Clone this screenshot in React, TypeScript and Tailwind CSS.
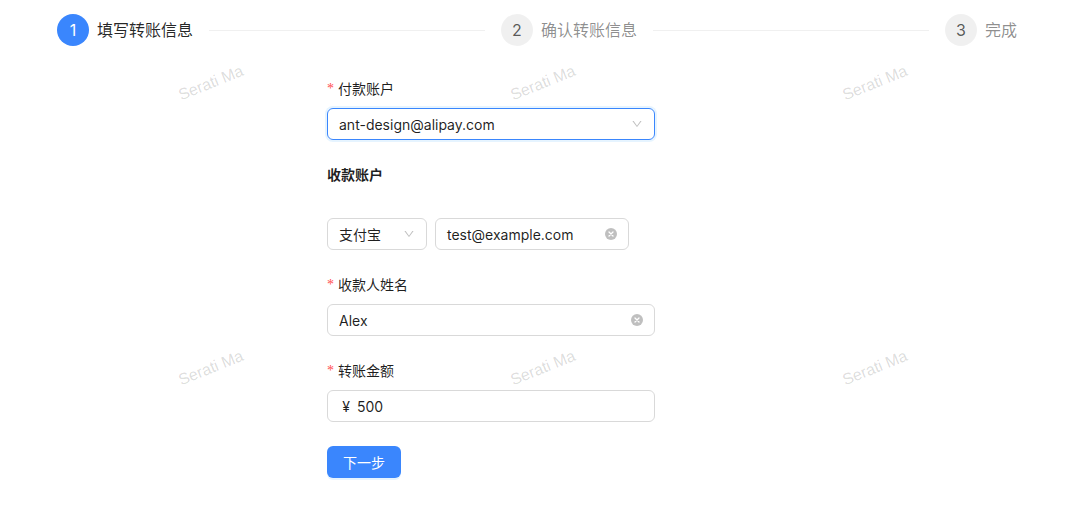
import React from "react";

const Down = () => (
  <svg viewBox="0 0 1024 1024" width="12" height="12" fill="rgba(0,0,0,0.25)">
    <path d="M884 256h-75c-5.1 0-9.9 2.5-12.9 6.6L512 654.2 227.9 262.6c-3-4.1-7.8-6.6-12.9-6.6h-75c-6.5 0-10.3 7.4-6.5 12.7l352.6 486.1c12.8 17.6 39 17.6 51.7 0l352.6-486.1c3.9-5.3.1-12.7-6.4-12.7z" />
  </svg>
);

const Clear = () => (
  <svg viewBox="0 0 12 12" width="12" height="12">
    <circle cx="6" cy="6" r="6" fill="rgba(0,0,0,0.25)" />
    <path d="M4 4L8 8M8 4L4 8" stroke="#fff" strokeWidth="1.3" strokeLinecap="round" />
  </svg>
);

const Label = ({ children, required }: { children: React.ReactNode; required?: boolean }) => (
  <div className="h-[22px] leading-[22px] mb-[8px] text-[14px] text-[rgba(0,0,0,0.88)] flex items-center">
    {required && (
      <span className="text-[#ff4d4f] mr-[4px] text-[14px] font-['Liberation_Serif',serif] leading-none">*</span>
    )}
    {children}
  </div>
);

const marks = [
  [211, 83],
  [543, 83],
  [875, 83],
  [211, 368],
  [543, 368],
  [875, 368],
];

export default function App() {
  return (
    <div className="relative w-[1067px] h-[505px] bg-white overflow-hidden font-['Inter','Noto_Sans_CJK_SC',sans-serif] text-[14px] text-[rgba(0,0,0,0.88)]">
      {/* Steps */}
      <div className="flex ml-[57px] w-[976px] mt-[14px]">
        <div className="flex-1 flex items-start overflow-hidden">
          <div className="w-[32px] h-[32px] rounded-full bg-[#3a86fd] text-white flex items-center justify-center text-[16px] shrink-0">1</div>
          <div className="relative ml-[8px] pr-[16px] text-[16px] leading-[32px] text-[rgba(0,0,0,0.85)] whitespace-nowrap">
            填写转账信息
            <div className="absolute left-full top-[16px] w-[9999px] h-px bg-[rgba(5,5,5,0.06)]" />
          </div>
        </div>
        <div className="flex-1 pl-[16px] flex items-start overflow-hidden">
          <div className="w-[32px] h-[32px] rounded-full bg-[rgba(0,0,0,0.06)] text-[rgba(0,0,0,0.65)] flex items-center justify-center text-[16px] shrink-0">2</div>
          <div className="relative ml-[8px] pr-[16px] text-[16px] leading-[32px] text-[rgba(0,0,0,0.45)] whitespace-nowrap">
            确认转账信息
            <div className="absolute left-full top-[16px] w-[9999px] h-px bg-[rgba(5,5,5,0.06)]" />
          </div>
        </div>
        <div className="pl-[16px] flex items-start">
          <div className="w-[32px] h-[32px] rounded-full bg-[rgba(0,0,0,0.06)] text-[rgba(0,0,0,0.65)] flex items-center justify-center text-[16px] shrink-0">3</div>
          <div className="ml-[8px] pr-[16px] text-[16px] leading-[32px] text-[rgba(0,0,0,0.45)] whitespace-nowrap">完成</div>
        </div>
      </div>

      {/* Form */}
      <div className="ml-[327px] w-[328px] mt-[32px]">
        <div className="mb-[24px]">
          <Label required>付款账户</Label>
          <div className="h-[32px] rounded-[6px] border border-[#3a86fd] shadow-[0_0_0_2px_rgba(5,145,255,0.1)] px-[11px] flex items-center justify-between">
            <span>ant-design@alipay.com</span>
            <Down />
          </div>
        </div>

        <div className="h-[22px] leading-[22px] font-semibold mb-[32px]">收款账户</div>

        <div className="flex gap-[8px] mb-[24px]">
          <div className="w-[100px] h-[32px] rounded-[6px] border border-[#d9d9d9] px-[11px] flex items-center justify-between">
            <span>支付宝</span>
            <Down />
          </div>
          <div className="w-[194px] h-[32px] rounded-[6px] border border-[#d9d9d9] px-[11px] flex items-center justify-between">
            <span>test@example.com</span>
            <Clear />
          </div>
        </div>

        <div className="mb-[24px]">
          <Label required>收款人姓名</Label>
          <div className="h-[32px] rounded-[6px] border border-[#d9d9d9] px-[11px] flex items-center justify-between">
            <span>Alex</span>
            <Clear />
          </div>
        </div>

        <div className="mb-[24px]">
          <Label required>转账金额</Label>
          <div className="h-[32px] rounded-[6px] border border-[#d9d9d9] px-[11px] flex items-center">
            <span className="mr-[4px] w-[14px] text-center">¥</span>
            <span>500</span>
          </div>
        </div>

        <button className="h-[32px] w-[74px] rounded-[6px] bg-[#3a86fd] text-white text-[14px] shadow-[0_2px_0_rgba(5,145,255,0.1)]">
          下一步
        </button>
      </div>

      {/* Watermark */}
      <div className="pointer-events-none absolute inset-0">
        {marks.map(([x, y], i) => (
          <div
            key={i}
            className="absolute text-[16px] leading-none text-[rgba(0,0,0,0.15)] whitespace-nowrap font-['Liberation_Sans',sans-serif]"
            style={{ left: x, top: y, transform: "translate(-50%, -50%) rotate(-22deg)" }}
          >
            Serati Ma
          </div>
        ))}
      </div>
    </div>
  );
}
